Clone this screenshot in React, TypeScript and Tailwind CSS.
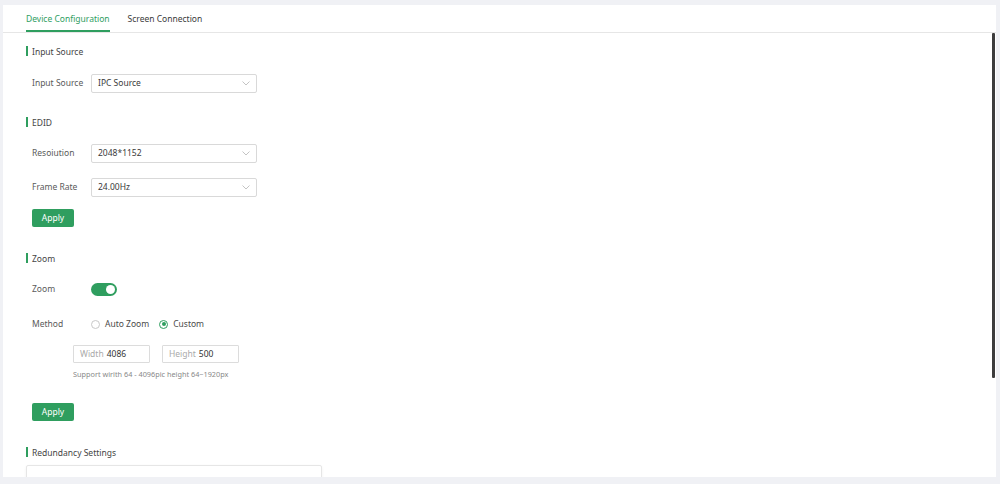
import { useState } from 'react';

const font = { fontFamily: '"Noto Sans", "Open Sans", Arial, sans-serif' };

// 区块标题
const SectionTitle = ({ title, className = '' }: { title: string; className?: string }) => (
  <div className={`flex items-center h-[10px] ${className}`}>
    <span className="w-[2px] h-[10px] bg-[#2f9e5f]" />
    <span className="ml-[4px] text-[8.5px] leading-[10px] text-[#444] pt-[1px]">{title}</span>
  </div>
);

const Chevron = () => (
  <svg width="8" height="5" viewBox="0 0 8 5" className="text-[#b5b5b5]">
    <path d="M0.5 0.5 L4 4 L7.5 0.5" fill="none" stroke="currentColor" strokeWidth="0.8" />
  </svg>
);

const SelectRow = ({ label, value, className = '' }: { label: string; value: string; className?: string }) => (
  <div className={`flex items-center h-[18px] ${className}`}>
    <span className="w-[59px] text-[8.5px] text-[#5a5a5a] pt-[1px]">{label}</span>
    <div className="w-[166px] h-[19px] border border-[#d9d9d9] rounded-[2px] flex items-center justify-between pl-[6px] pr-[6px]">
      <span className="text-[8.5px] text-[#3a3a3a] pt-[1px]">{value}</span>
      <Chevron />
    </div>
  </div>
);

const ApplyButton = ({ className = '' }: { className?: string }) => (
  <button className={`w-[42px] h-[18px] bg-[#2f9e5f] rounded-[2px] text-white text-[8.5px] flex items-center justify-center pt-[1px] ${className}`}>
    Apply
  </button>
);

const Radio = ({ checked, label }: { checked: boolean; label: string }) => (
  <div className="flex items-center">
    <span
      className={`w-[9px] h-[9px] rounded-full border flex items-center justify-center ${
        checked ? 'border-[#2f9e5f]' : 'border-[#c8c8c8]'
      }`}
    >
      {checked && <span className="w-[4px] h-[4px] rounded-full bg-[#2f9e5f]" />}
    </span>
    <span className="ml-[5px] text-[8.5px] text-[#4a4a4a] pt-[1px]">{label}</span>
  </div>
);

const App = () => {
  const [tab, setTab] = useState(0);
  const tabs = ['Device Configuration', 'Screen Connection'];

  return (
    <div style={font} className="w-[1000px] h-[484px] bg-[#f0f1f5] pt-[5px] pl-[3px] pr-[4px] pb-[7px]">
      <div className="bg-white h-full flex flex-col overflow-hidden">
        {/* 탭 */}
        <div className="h-[28px] border-b border-[#e6e6e6] flex items-end pl-[23px] gap-[18px] shrink-0">
          {tabs.map((t, i) => (
            <button
              key={t}
              onClick={() => setTab(i)}
              className={`h-[28px] flex items-center text-[8.5px] pt-[5px] border-b-2 ${
                tab === i ? 'text-[#2f9e5f] border-[#2f9e5f]' : 'text-[#3a3a3a] border-transparent'
              }`}
            >
              {t}
            </button>
          ))}
        </div>

        {/* 内容 */}
        <div className="flex-1 relative pl-[23px]">
          <div className="absolute right-[1px] top-0 w-[3px] h-[345px] bg-[#3c3c3c] rounded-[1px]" />

          <SectionTitle title="Input Source" className="mt-[13px]" />
          <div className="pl-[6px]">
            <SelectRow label="Input Source" value="IPC Source" className="mt-[18px]" />
          </div>

          <SectionTitle title="EDID" className="mt-[25px]" />
          <div className="pl-[6px]">
            <SelectRow label="Resoiution" value="2048*1152" className="mt-[17px]" />
            <SelectRow label="Frame Rate" value="24.00Hz" className="mt-[16px]" />
            <ApplyButton className="mt-[13px]" />
          </div>

          <SectionTitle title="Zoom" className="mt-[26px]" />
          <div className="pl-[6px]">
            <div className="flex items-center h-[18px] mt-[17px]">
              <span className="w-[59px] text-[8.5px] text-[#5a5a5a] pt-[1px]">Zoom</span>
              <span className="w-[26px] h-[13px] rounded-full bg-[#2f9e5f] flex items-center justify-end pr-[2px]">
                <span className="w-[9px] h-[9px] rounded-full bg-white" />
              </span>
            </div>
            <div className="flex items-center h-[18px] mt-[17px]">
              <span className="w-[59px] text-[8.5px] text-[#5a5a5a] pt-[1px]">Method</span>
              <div className="flex items-center gap-[10px]">
                <Radio checked={false} label="Auto Zoom" />
                <Radio checked label="Custom" />
              </div>
            </div>
            <div className="pl-[41px]">
              <div className="flex gap-[12px] mt-[12px]">
                <div className="w-[77px] h-[18px] border border-[#dcdcdc] rounded-[1px] flex items-center pl-[6px] pt-[1px] text-[8.5px]">
                  <span className="text-[#aaa]">Width</span>
                  <span className="ml-[3px] text-[#333]">4086</span>
                </div>
                <div className="w-[77px] h-[18px] border border-[#dcdcdc] rounded-[1px] flex items-center pl-[6px] pt-[1px] text-[8.5px]">
                  <span className="text-[#aaa]">Height</span>
                  <span className="ml-[3px] text-[#333]">500</span>
                </div>
              </div>
              <p className="mt-[6px] text-[7.3px] leading-[10px] text-[#888]">Support wirith 64 - 4096pic height 64~1920px</p>
            </div>
            <ApplyButton className="mt-[24px]" />
          </div>

          <SectionTitle title="Redundancy Settings" className="mt-[26px]" />
          <div className="mt-[8px] w-[296px] h-[30px] border border-[#e6e6e6] rounded-[2px] shadow-[0_1px_3px_rgba(0,0,0,0.06)]" />
        </div>
      </div>
    </div>
  );
};

export default App;
